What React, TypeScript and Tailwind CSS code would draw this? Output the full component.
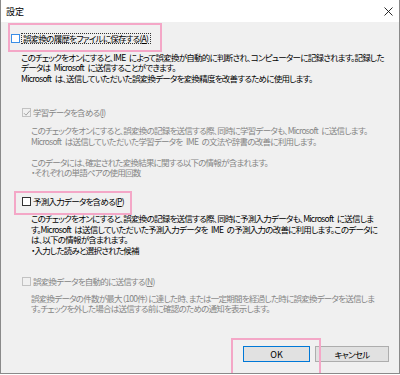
import React from "react";

const font = "font-['Noto_Sans_CJK_JP','Noto_Sans',sans-serif] [font-feature-settings:'palt'] tracking-[-0.75px]";

function CheckBox({ kind }: { kind: "focus" | "normal" | "disabled" | "disabledChecked" }) {
  const border =
    kind === "focus" ? "border-[#3a8ee6]" : kind === "normal" ? "border-[#333333]" : "border-[#c2c2c2]";
  const bg = kind === "disabled" || kind === "disabledChecked" ? "bg-[#f0f0f0]" : "bg-white";
  return (
    <div className={`w-[9px] h-[9px] border ${border} ${bg} shrink-0 relative`}>
      {kind === "disabledChecked" && (
        <svg className="absolute left-[0px] top-[0px]" width="8" height="8" viewBox="0 0 8 8">
          <path d="M1 4.2 L3 6.2 L7 1.6" fill="none" stroke="#a3a3a3" strokeWidth="1" />
        </svg>
      )}
    </div>
  );
}

const sp = (s: string) => s.replace(/ /g, "\u2002");

function Lines({ lines, gray }: { lines: string[]; gray?: boolean }) {
  return (
    <div className={`leading-[10.5px] text-[8.5px] ${gray ? "text-[#858585]" : "text-black"}`}>
      {lines.map((l, i) => (
        <div key={i} className="whitespace-nowrap h-[10.5px]">
          {l === "" ? "\u00a0" : sp(l)}
        </div>
      ))}
    </div>
  );
}

export default function App() {
  return (
    <div className={`w-[400px] h-[374px] relative flex flex-col bg-white border-l border-r border-b border-[#8a8a8a] overflow-hidden ${font}`}>
      {/* Title bar */}
      <div className="h-[22px] bg-white flex items-center justify-between pl-[5px] pr-[5px] shrink-0">
        <span className="text-[9px] text-black leading-none tracking-normal">設定</span>
        <svg width="9" height="9" viewBox="0 0 9 9" className="mr-[1px]">
          <path d="M0.5 0.5 L8.5 8.5 M8.5 0.5 L0.5 8.5" stroke="#111" strokeWidth="0.9" fill="none" />
        </svg>
      </div>

      {/* Body */}
      <div className="flex-1 bg-[#f0f0f0] flex flex-col pt-[11px]">
        {/* Row 1 */}
        <div className="flex items-center h-[11px] pl-[10px]">
          <CheckBox kind="focus" />
          <span className="ml-[1px] border border-dotted border-[#333] pl-[1px] pr-[2px] text-[8.5px] leading-[9px] text-black whitespace-nowrap h-[11px] flex items-center">
            誤変換の履歴をファイルに保存する(<span className="underline">A</span>)
          </span>
        </div>
        <div className="mt-[7.5px] pl-[20px]">
          <Lines
            lines={[
              "このチェックをオンにすると、IME によって誤変換が自動的に判断され、コンピューターに記録されます。記録した",
              "データは Microsoft に送信することができます。",
              "Microsoft は、送信していただいた誤変換データを変換精度を改善するために使用します。",
            ]}
          />
        </div>

        {/* Row 2 */}
        <div className="flex items-center h-[11px] pl-[21px] mt-[24px]">
          <CheckBox kind="disabledChecked" />
          <span className="ml-[2px] text-[8.5px] leading-[11px] text-[#858585] whitespace-nowrap">
            学習データを含める(<span className="underline">I</span>)
          </span>
        </div>
        <div className="mt-[7px] pl-[30px]">
          <Lines
            gray
            lines={[
              "このチェックをオンにすると、誤変換の記録を送信する際、同時に学習データも、Microsoft に送信します。",
              "Microsoft は送信していただいた学習データを IME の文法や辞書の改善に利用します。",
              "",
              "このデータには、確定された変換結果に関する以下の情報が含まれます。",
              "・それぞれの単語ペアの使用回数",
            ]}
          />
        </div>

        {/* Row 3 */}
        <div className="flex items-center h-[11px] pl-[21px] mt-[18.5px]">
          <CheckBox kind="normal" />
          <span className="ml-[2px] text-[8.5px] leading-[11px] text-black whitespace-nowrap">
            予測入力データを含める(<span className="underline">P</span>)
          </span>
        </div>
        <div className="mt-[6.25px] pl-[30px]">
          <Lines
            lines={[
              "このチェックをオンにすると、誤変換の記録を送信する際、同時に予測入力データも、Microsoft に送信しま",
              "す。Microsoft は送信していただいた予測入力データを IME の予測入力の改善に利用します。このデータに",
              "は、以下の情報が含まれます。",
              "・入力した読みと選択された候補",
            ]}
          />
        </div>

        {/* Row 4 */}
        <div className="flex items-center h-[11px] pl-[21px] mt-[20.5px]">
          <CheckBox kind="disabled" />
          <span className="ml-[2px] text-[8.5px] leading-[11px] text-[#858585] whitespace-nowrap">
            誤変換データを自動的に送信する(<span className="underline">N</span>)
          </span>
        </div>
        <div className="mt-[5.85px] pl-[30px]">
          <Lines
            gray
            lines={[
              "誤変換データの件数が最大（100件）に達した時、または一定期間を経過した時に誤変換データを送信しま",
              "す。チェックを外した場合は送信する前に確認のための通知を表示します。",
            ]}
          />
        </div>

        {/* Buttons */}
        <div className="flex justify-end gap-[5px] pr-[10px] mt-[32.5px]">
          <button className="w-[67px] h-[16px] bg-[#e1e1e1] border-[1.5px] border-[#0078d7] text-[9px] leading-none text-black flex items-center justify-center tracking-normal">
            OK
          </button>
          <button className="w-[74px] h-[16px] bg-[#e1e1e1] border border-[#adadad] text-[8.5px] leading-none text-black flex items-center justify-center">
            キャンセル
          </button>
        </div>
      </div>

      {/* Pink annotation boxes */}
      <div className="absolute left-[7px] top-[23px] w-[154px] h-[29px] border-2 border-[#f4a7c7] pointer-events-none" />
      <div className="absolute left-[13px] top-[191px] w-[118px] h-[24px] border-2 border-[#f4a7c7] pointer-events-none" />
      <div className="absolute left-[230px] top-[338px] w-[90px] h-[60px] border-2 border-[#f4a7c7] pointer-events-none" />
    </div>
  );
}
